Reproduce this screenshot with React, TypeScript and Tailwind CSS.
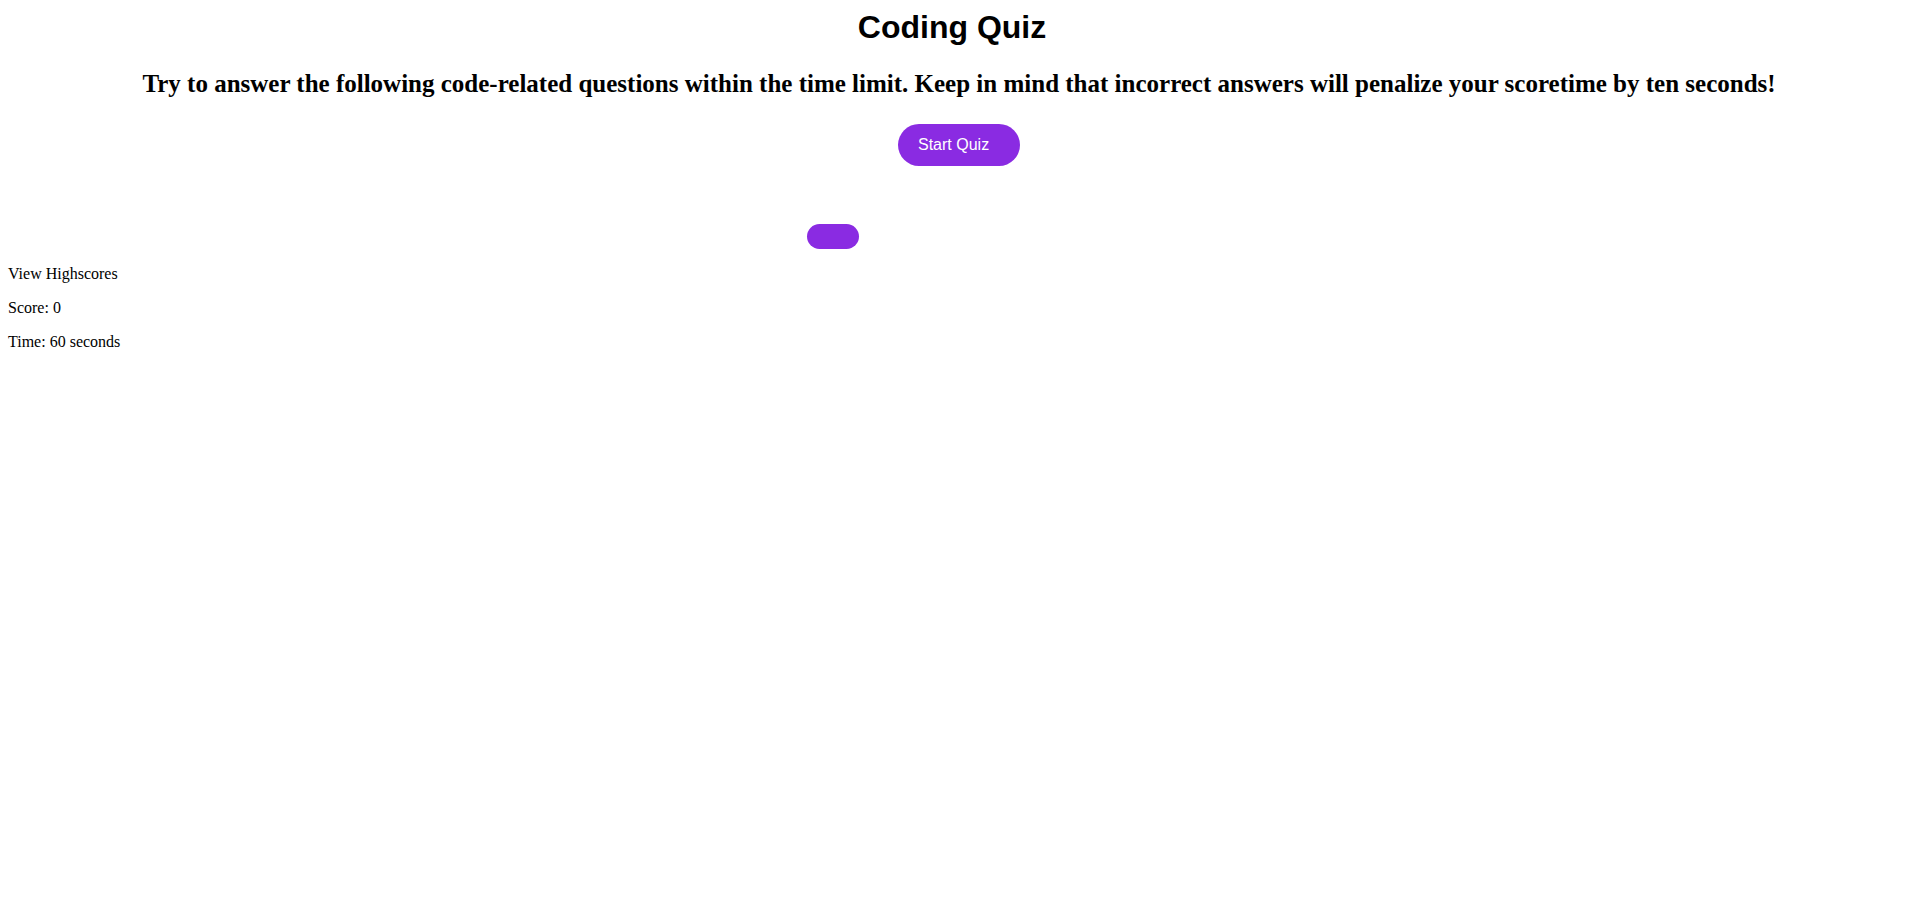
const App = () => {
  return (
    <div className="min-h-screen bg-white p-2 text-black">
      <header className="text-center">
        <h1 className="pt-px pr-[14px] font-['Liberation_Sans',Arial,sans-serif] text-[32px] font-bold leading-[37px]">Coding Quiz</h1>
        <h2 className="mt-[23px] font-['Liberation_Serif','Times_New_Roman',serif] text-[25px] font-bold leading-[29px]">
          Try to answer the following code-related questions within the time limit. Keep in mind that incorrect answers will penalize your scoretime by ten seconds!
        </h2>
        <button className="mt-[26px] h-[42px] w-[122px] rounded-full bg-[#8a2be2] pl-5 text-left font-['Liberation_Sans',Arial,sans-serif] text-base text-white">
          Start Quiz
        </button>
      </header>

      {/* QUESTION AREA */}
      <div className="mt-[58px] pl-[799px]">
        <button className="block h-[25px] w-[52px] rounded-full bg-[#8a2be2]"></button>
      </div>

      {/* STATUS */}
      <div className="font-['Liberation_Serif','Times_New_Roman',serif] text-base leading-[18px]">
        <p className="my-4">View Highscores</p>
        <p className="my-4">Score: 0</p>
        <p className="my-4">Time: 60 seconds</p>
      </div>
    </div>
  );
}

export default App;
